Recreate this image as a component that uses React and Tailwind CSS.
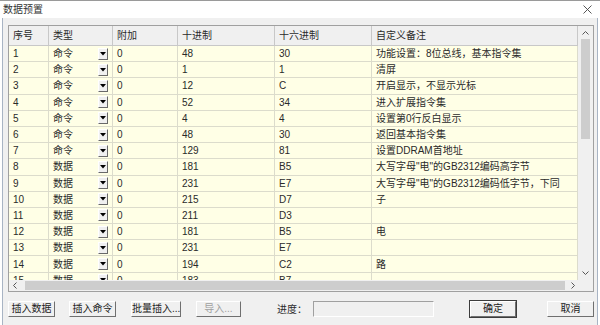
import React from 'react';

const rows = [
  ['1', '命令', '0', '48', '30', '功能设置：8位总线，基本指令集'],
  ['2', '命令', '0', '1', '1', '清屏'],
  ['3', '命令', '0', '12', 'C', '开启显示，不显示光标'],
  ['4', '命令', '0', '52', '34', '进入扩展指令集'],
  ['5', '命令', '0', '4', '4', '设置第0行反白显示'],
  ['6', '命令', '0', '48', '30', '返回基本指令集'],
  ['7', '命令', '0', '129', '81', '设置DDRAM首地址'],
  ['8', '数据', '0', '181', 'B5', '大写字母"电"的GB2312编码高字节'],
  ['9', '数据', '0', '231', 'E7', '大写字母"电"的GB2312编码低字节，下同'],
  ['10', '数据', '0', '215', 'D7', '子'],
  ['11', '数据', '0', '211', 'D3', ''],
  ['12', '数据', '0', '181', 'B5', '电'],
  ['13', '数据', '0', '231', 'E7', ''],
  ['14', '数据', '0', '194', 'C2', '路'],
  ['15', '数据', '0', '183', 'B7', ''],
];

const headers = ['序号', '类型', '附加', '十进制', '十六进制', '自定义备注'];
const cols = 'grid grid-cols-[40px_64px_65px_97px_97px_1fr]';

function DropButton() {
  return (
    <span className="flex h-[12px] w-[10px] items-center justify-center border-t border-l border-t-white border-l-white border-r border-b border-r-[#696969] border-b-[#696969] bg-[#f0f0f0]">
      <svg width="6" height="4" viewBox="0 0 6 4">
        <path d="M0 0 H6 L3 3.5 Z" fill="#000" />
      </svg>
    </span>
  );
}

function Btn({ children, disabled, primary, className = '' }) {
  return (
    <button
      className={
        'h-[16px] text-[10px] leading-none whitespace-nowrap bg-[#f0f0f0] border-t border-l border-t-white border-l-white border-r border-b border-r-[#6f6f6f] border-b-[#6f6f6f] ' +
        (primary ? 'outline outline-1 outline-[#3c3c3c] ' : '') +
        (disabled ? 'text-[#a0a0a0] ' : 'text-[#222] ') +
        className
      }
    >
      {children}
    </button>
  );
}

export default function App() {
  return (
    <div className="w-[600px] h-[325px] overflow-hidden bg-white font-['Liberation_Sans','Noto_Sans_CJK_SC',sans-serif] text-[10px] text-[#2a2a2a] flex flex-col border-t border-[#9a9a9a]">
      <div className="h-[17px] flex items-center justify-between pl-[3px] pr-[8px] bg-white">
        <span className="text-[10px] leading-none text-[#333]">数据预置</span>
        <svg width="9" height="9" viewBox="0 0 9 9">
          <path d="M0.5 0.5 L8.5 8.5 M8.5 0.5 L0.5 8.5" stroke="#444" strokeWidth="0.9" />
        </svg>
      </div>
      <div className="flex-1 mx-[2px] border-x border-[#a8b4c4] bg-[#f0f0f0] flex flex-col pl-[5px] pr-[3px]">
        <div className="mt-[7px] w-[586px] h-[267px] border border-[#a0a0a0] bg-white flex flex-col">
          <div className="flex h-[254px]">
            <div className="w-[569px] overflow-hidden">
              <div className={cols + ' h-[20px] bg-[#f0f0f0] border-b border-[#c8c8c8]'}>
                {headers.map((h) => (
                  <div key={h} className="flex items-center px-[4px] border-r border-[#c8c8c8] whitespace-nowrap">
                    {h}
                  </div>
                ))}
              </div>
              {rows.map((r) => (
                <div key={r[0]} className={cols + ' h-[16.2px] bg-[#ffffe6]'}>
                  {r.map((c, i) => (
                    <div
                      key={i}
                      className="flex items-center justify-between px-[4px] border-r border-b border-[#dcdccc] whitespace-nowrap overflow-hidden"
                    >
                      <span>{c}</span>
                      {i === 1 && <DropButton />}
                    </div>
                  ))}
                </div>
              ))}
            </div>
            <div className="w-[15px] bg-[#f0f0f0] flex flex-col items-center">
              <svg className="mt-[5px]" width="7" height="4" viewBox="0 0 7 4">
                <path d="M0.5 3.5 L3.5 0.5 L6.5 3.5" stroke="#555" fill="none" />
              </svg>
              <div className="mt-[4px] w-[9px] h-[100px] bg-[#cdcdcd]" />
              <div className="flex-1" />
              <svg className="mb-[5px]" width="7" height="4" viewBox="0 0 7 4">
                <path d="M0.5 0.5 L3.5 3.5 L6.5 0.5" stroke="#555" fill="none" />
              </svg>
            </div>
          </div>
          <div className="flex h-[11px]">
            <div className="w-[569px] bg-[#f0f0f0] flex items-center">
              <svg className="ml-[4px]" width="4" height="7" viewBox="0 0 4 7">
                <path d="M3.5 0.5 L0.5 3.5 L3.5 6.5" stroke="#555" fill="none" />
              </svg>
              <div className="ml-[8px] w-[540px] h-[9px] bg-[#cdcdcd]" />
              <div className="flex-1" />
              <svg className="mr-[3px]" width="4" height="7" viewBox="0 0 4 7">
                <path d="M0.5 0.5 L3.5 3.5 L0.5 6.5" stroke="#555" fill="none" />
              </svg>
            </div>
            <div className="flex-1 bg-[#f0f0f0]" />
          </div>
        </div>
        <div className="mt-[9px] flex items-center h-[16px]">
          <Btn className="w-[48px]">插入数据</Btn>
          <Btn className="w-[48px] ml-[14px]">插入命令</Btn>
          <Btn className="w-[50px] ml-[15px]">批量插入...</Btn>
          <Btn className="w-[46px] ml-[15px]" disabled>导入...</Btn>
          <span className="ml-[36px] whitespace-nowrap">进度：</span>
          <div className="ml-[6px] w-[124px] h-[16px] border-t border-l border-[#a0a0a0] border-r border-b border-r-white border-b-white bg-[#f0f0f0]" />
          <Btn className="w-[47px] ml-[36px]" primary>确定</Btn>
          <Btn className="w-[48px] ml-[31px]">取消</Btn>
        </div>
      </div>
    </div>
  );
}
